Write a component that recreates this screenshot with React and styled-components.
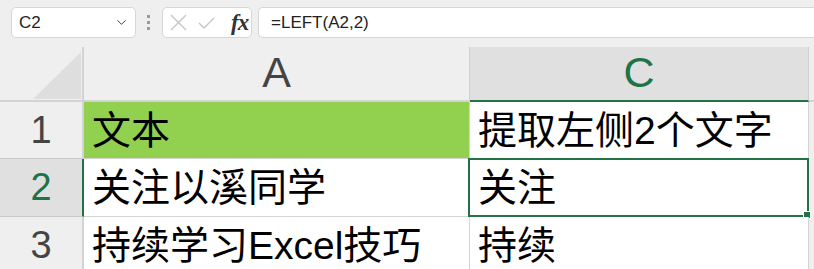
import React from "react";
import styled, { createGlobalStyle } from "styled-components";
import { ChevronDown } from "lucide-react";

const GREEN = "#217346";

const Global = createGlobalStyle`
	body {
		margin: 0;
		background: #efefef;
		overflow: hidden;
		font-family: "Liberation Sans", Arial, sans-serif;
	}
`;

const Toolbar = styled.div`
	display: flex;
	align-items: center;
	height: 47px;
	padding: 0 0 2px 11px;
	box-sizing: border-box;
`;

const Box = styled.div`
	display: flex;
	align-items: center;
	height: 31px;
	box-sizing: border-box;
	background: #fff;
	border: 1px solid #d6d6d6;
	border-radius: 5px;
`;

const NameBox = styled(Box)`
	width: 125px;
	padding: 0 6px 0 7px;
	justify-content: space-between;
	font-size: 17px;
	color: #222;
`;

const Dots = styled.div`
	display: flex;
	flex-direction: column;
	gap: 3px;
	margin: 0 12px 0 11px;
	span {
		width: 3px;
		height: 3px;
		background: #9a9a9a;
	}
`;

const FuncBox = styled(Box)`
	width: 90px;
	padding: 0 5px 0 7px;
	gap: 0;
	svg {
		flex: none;
	}
`;

const Fx = styled.span`
	margin-left: 16px;
	font-family: "Liberation Serif", "Times New Roman", serif;
	font-style: italic;
	font-weight: bold;
	font-size: 23px;
	line-height: 1;
	color: #333;
	letter-spacing: -1px;
`;

const FormulaBar = styled(Box)`
	flex: 1;
	margin-left: 6px;
	padding-left: 12px;
	border-right: none;
	border-radius: 5px 0 0 5px;
	font-size: 17px;
	color: #222;
`;

const Sheet = styled.div`
	display: grid;
	grid-template-columns: 84px 386px 339px 1fr;
	grid-template-rows: 55px 57px 58px 57px;
`;

const Corner = styled.div`
	position: relative;
	border-right: 2px solid #d3d3d3;
	border-bottom: 2px solid #d3d3d3;
	box-sizing: border-box;
	&::after {
		content: "";
		position: absolute;
		right: 1px;
		bottom: 1px;
		width: 48px;
		height: 47px;
		background: #dedede;
		clip-path: polygon(100% 0, 100% 100%, 0 100%);
	}
`;

const ColHead = styled.div`
	display: flex;
	align-items: center;
	justify-content: center;
	box-sizing: border-box;
	background: ${(p) => (p.$active ? "#e0e0e0" : "#efefef")};
	border-right: 1px solid #d0d0d0;
	border-bottom: 2px solid ${(p) => (p.$active ? GREEN : "#d3d3d3")};
	font-size: 43px;
	color: ${(p) => (p.$active ? GREEN : "#444")};
	padding-bottom: 2px;
`;

const Filler = styled.div`
	background: #efefef;
	border-bottom: ${(p) => (p.$head ? "2px solid #d3d3d3" : "none")};
	box-sizing: border-box;
`;

const RowHead = styled.div`
	display: flex;
	align-items: center;
	justify-content: center;
	box-sizing: border-box;
	background: ${(p) => (p.$active ? "#e0e0e0" : "#efefef")};
	border-bottom: 1px solid #c9c9c9;
	border-right: 2px solid ${(p) => (p.$active ? GREEN : "#d3d3d3")};
	font-size: 38px;
	color: ${(p) => (p.$active ? GREEN : "#444")};
`;

const Cell = styled.div`
	position: relative;
	display: flex;
	align-items: center;
	padding-left: 8px;
	box-sizing: border-box;
	background: ${(p) => p.$fill || "#fff"};
	border-right: 1px solid #d4d4d4;
	border-bottom: 1px solid #d4d4d4;
	font-family: "Liberation Sans", "Noto Sans CJK SC", sans-serif;
	font-size: 39px;
	line-height: 1;
	color: #000;
	white-space: nowrap;
`;

const Selection = styled.div`
	position: absolute;
	inset: -1px -1px -1px -2px;
	border: 2px solid ${GREEN};
	pointer-events: none;
	&::after {
		content: "";
		position: absolute;
		right: -4px;
		bottom: -4px;
		width: 6px;
		height: 6px;
		background: ${GREEN};
		border: 1px solid #fff;
	}
`;

const rows = [
	{ n: 1, a: "文本", c: "提取左侧2个文字", fill: "#92d050" },
	{ n: 2, a: "关注以溪同学", c: "关注", active: true },
	{ n: 3, a: "持续学习Excel技巧", c: "持续" },
];

export default function App() {
	return (
		<>
			<Global />
			<Toolbar>
				<NameBox>
					<span>C2</span>
					<ChevronDown size={15} color="#444" strokeWidth={1.6} />
				</NameBox>
				<Dots>
					<span />
					<span />
					<span />
				</Dots>
				<FuncBox>
					<svg width="17" height="17" viewBox="0 0 17 17">
						<path d="M1 1L16 16M16 1L1 16" stroke="#c4c4c4" strokeWidth="1.3" fill="none" />
					</svg>
					<svg width="17" height="12" viewBox="0 0 17 12" style={{ marginLeft: 11 }}>
						<path d="M1 6L6 11L16 1" stroke="#c4c4c4" strokeWidth="1.3" fill="none" />
					</svg>
					<Fx>fx</Fx>
				</FuncBox>
				<FormulaBar>=LEFT(A2,2)</FormulaBar>
			</Toolbar>
			<Sheet>
				<Corner />
				<ColHead>A</ColHead>
				<ColHead $active>C</ColHead>
				<Filler $head />
				{rows.map((r) => (
					<React.Fragment key={r.n}>
						<RowHead $active={r.active}>{r.n}</RowHead>
						<Cell $fill={r.fill}>{r.a}</Cell>
						<Cell>
							{r.c}
							{r.active && <Selection />}
						</Cell>
						<Filler />
					</React.Fragment>
				))}
			</Sheet>
		</>
	);
}
